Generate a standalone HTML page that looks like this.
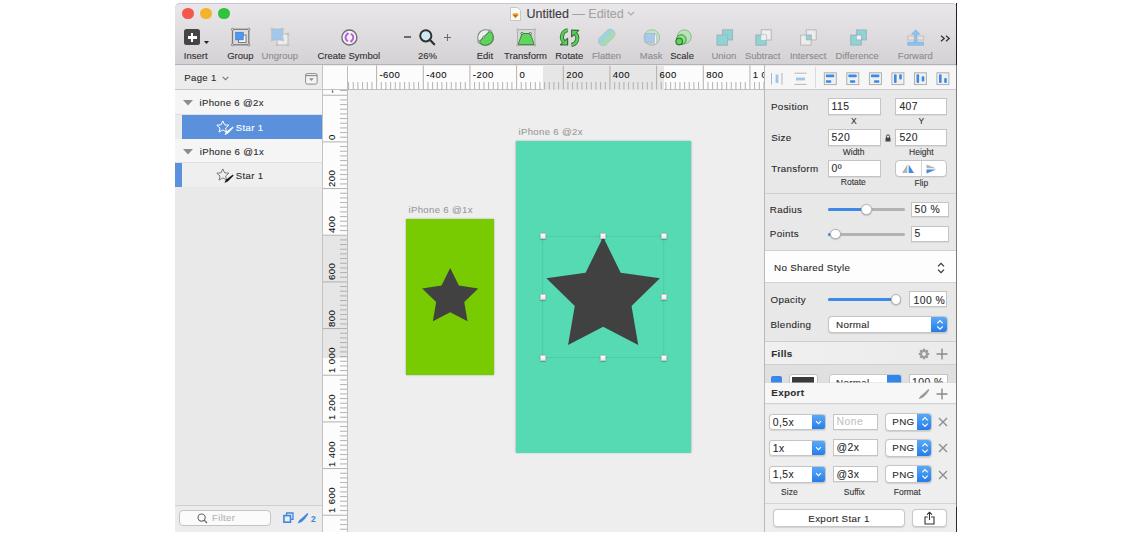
<!DOCTYPE html>
<html><head><meta charset="utf-8">
<style>
*{margin:0;padding:0;box-sizing:border-box}
html,body{width:1131px;height:533px;overflow:hidden;background:#fff;font-family:"Liberation Sans",sans-serif;position:relative}
.a{position:absolute}
.t{position:absolute;line-height:1;white-space:nowrap;-webkit-text-stroke:0.1px currentColor}
svg{position:absolute;overflow:visible}
.tl{position:absolute;line-height:1;white-space:nowrap;font-size:9.5px;color:#303030;top:50.6px;width:80px;text-align:center;-webkit-text-stroke:0.1px currentColor}
.tl.d{color:#8c8c8c}
.dot{position:absolute;top:7.5px;width:11.5px;height:11.5px;border-radius:50%}
.row{position:absolute;left:175px;width:147.5px;height:24.5px}
</style></head><body>
<!-- window frame -->
<div class="a" id="win" style="left:175px;top:3px;width:782px;height:529px;background:#ececec;border-radius:5px 5px 0 0;overflow:hidden"></div>
<div class="a" style="left:175px;top:3px;width:782px;height:62px;background:linear-gradient(#e9e7e9,#d4d2d4);border-radius:5px 5px 0 0;border-bottom:1px solid #b4b2b4;border-top:1px solid #c9c7c9"></div>
<div class="a" style="left:956px;top:3px;width:1px;height:529px;background:linear-gradient(#222 0,#222 62px,#7a7a7a 62px,#7a7a7a 504px,#2a2a2a 504px)"></div>

<!-- traffic lights -->
<div class="dot" style="left:182px;background:#f4584d"></div>
<div class="dot" style="left:200px;background:#f5b32c"></div>
<div class="dot" style="left:218px;background:#30c33e"></div>

<!-- title -->
<svg style="left:510px;top:7px" width="11" height="14" viewBox="0 0 11 14"><path d="M0.5 0.5H7.5L10.5 3.5V13.5H0.5Z" fill="#fafafa" stroke="#bdbdbd" stroke-width="0.8"/><path d="M1.8 7.6L3.6 5.9H7.4L9.2 7.6L5.5 11.6Z" fill="#c9d64a"/><path d="M3 7.8H8L5.5 10.8Z" fill="#ec4a22"/><path d="M3.8 6.6H7.2L8 7.8H3Z" fill="#f2a53a"/></svg>
<div class="t" style="left:526.5px;top:7.6px;font-size:12.5px;color:#3b3b3b">Untitled <span style="color:#a3a3a3">— Edited</span></div>
<svg style="left:627px;top:11px" width="8" height="5" viewBox="0 0 8 5"><path d="M0.8 0.8L4 4L7.2 0.8" fill="none" stroke="#a9a9a9" stroke-width="1.2"/></svg>

<!-- toolbar icons -->
<!-- Insert -->
<div class="a" style="left:184px;top:29px;width:16px;height:16px;background:#454545;border-radius:2.5px"></div>
<div class="a" style="left:187.5px;top:35.9px;width:9px;height:2.9px;background:#fff"></div>
<div class="a" style="left:190.55px;top:32.9px;width:2.9px;height:9px;background:#fff"></div>
<svg style="left:204px;top:41px" width="5" height="3" viewBox="0 0 5 3"><path d="M0 0H5L2.5 3Z" fill="#222"/></svg>
<div class="tl" style="left:155.7px">Insert</div>
<!-- Group -->
<svg style="left:231px;top:28px" width="20" height="18" viewBox="0 0 20 18">
<rect x="1.5" y="1.3" width="16.3" height="15.5" fill="none" stroke="#7a7a7a" stroke-width="1.3"/>
<rect x="7.5" y="7" width="7.5" height="7.5" fill="#f4f4f4" stroke="#7a7a7a" stroke-width="1"/>
<rect x="4.7" y="4.3" width="7.5" height="7.5" fill="#4c9af0" stroke="#3f7fcf" stroke-width="0.8"/>
<circle cx="1.5" cy="1.3" r="1.1" fill="#eee" stroke="#7a7a7a" stroke-width="0.8"/><circle cx="17.8" cy="1.3" r="1.1" fill="#eee" stroke="#7a7a7a" stroke-width="0.8"/><circle cx="1.5" cy="16.8" r="1.1" fill="#eee" stroke="#7a7a7a" stroke-width="0.8"/><circle cx="17.8" cy="16.8" r="1.1" fill="#eee" stroke="#7a7a7a" stroke-width="0.8"/>
</svg>
<div class="tl" style="left:200.35px">Group</div>
<!-- Ungroup -->
<svg style="left:270px;top:28px" width="20" height="18" viewBox="0 0 20 18">
<rect x="7" y="6" width="11" height="11" fill="#ececec" stroke="#b9b9b9" stroke-width="0.9"/>
<rect x="1.8" y="1" width="11" height="11" fill="#a4c8ec" stroke="#a9bfd6" stroke-width="0.8"/>
<circle cx="1.8" cy="1" r="1" fill="#e8e8e8" stroke="#aaa" stroke-width="0.6"/><circle cx="12.8" cy="1" r="1" fill="#e8e8e8" stroke="#aaa" stroke-width="0.6"/><circle cx="1.8" cy="12" r="1" fill="#e8e8e8" stroke="#aaa" stroke-width="0.6"/><circle cx="12.8" cy="12" r="1" fill="#e8e8e8" stroke="#aaa" stroke-width="0.6"/><circle cx="18" cy="6" r="1" fill="#e8e8e8" stroke="#aaa" stroke-width="0.6"/><circle cx="18" cy="17" r="1" fill="#e8e8e8" stroke="#aaa" stroke-width="0.6"/><circle cx="7" cy="17" r="1" fill="#e8e8e8" stroke="#aaa" stroke-width="0.6"/>
</svg>
<div class="tl d" style="left:239.85px">Ungroup</div>
<!-- Create Symbol -->
<svg style="left:341px;top:28.5px" width="17" height="17" viewBox="0 0 17 17">
<circle cx="8.4" cy="8.5" r="7.5" fill="#f6f4f6" stroke="#6f6d6f" stroke-width="1.4"/>
<path d="M7.1 4.9A3.8 3.8 0 0 0 7.1 12.1" fill="none" stroke="#b55ee2" stroke-width="1.9"/>
<path d="M9.7 4.9A3.8 3.8 0 0 1 9.7 12.1" fill="none" stroke="#b55ee2" stroke-width="1.9"/>
<path d="M5.4 3.6L8.2 4.1L6.3 6.4Z" fill="#b55ee2"/><path d="M11.4 13.4L8.6 12.9L10.5 10.6Z" fill="#b55ee2"/>
</svg>
<div class="tl" style="left:308.8px">Create Symbol</div>
<!-- Zoom -->
<div class="a" style="left:404px;top:36.2px;width:7.2px;height:1.6px;background:#6b6b6b"></div>
<svg style="left:419px;top:28.5px" width="17" height="17" viewBox="0 0 17 17">
<circle cx="6.8" cy="6.8" r="5.6" fill="#cfe9f3" stroke="#2f2f2f" stroke-width="2"/>
<path d="M10.8 10.8L15.2 15.3" stroke="#2f2f2f" stroke-width="2.2" stroke-linecap="round"/>
</svg>
<div class="a" style="left:443.7px;top:36.5px;width:7.2px;height:1.6px;background:#6b6b6b"></div>
<div class="a" style="left:446.5px;top:33.7px;width:1.6px;height:7.2px;background:#6b6b6b"></div>
<div class="tl" style="left:387.5px">26%</div>
<!-- Edit -->
<svg style="left:476.5px;top:28.5px" width="17" height="17" viewBox="0 0 17 17">
<circle cx="8.6" cy="8.6" r="7.9" fill="#eeeeee" stroke="#7c8f7c" stroke-width="1.1"/>
<path d="M1.9 12.9L12.9 1.9A7.9 7.9 0 1 1 1.9 12.9Z" fill="#5fd35f" stroke="#4b8a4b" stroke-width="1.1"/>
<circle cx="1.9" cy="12.9" r="1.1" fill="#eee" stroke="#666" stroke-width="0.7"/><circle cx="12.9" cy="1.9" r="1.1" fill="#eee" stroke="#666" stroke-width="0.7"/><circle cx="6.6" cy="8.2" r="1" fill="#eee" stroke="#666" stroke-width="0.7"/>
</svg>
<div class="tl" style="left:444.85px">Edit</div>
<!-- Transform -->
<svg style="left:516.5px;top:28.5px" width="18" height="17" viewBox="0 0 18 17">
<rect x="0.5" y="0.5" width="17.4" height="15.8" fill="#d3dad3" stroke="#a3a3a3" stroke-width="0.8"/>
<path d="M5 4.5H13.3L17.2 15.6H1.1Z" fill="#5cd65c" stroke="#3b7b3b" stroke-width="0.9" stroke-linejoin="round"/>
<circle cx="5" cy="4.5" r="1.1" fill="#eee" stroke="#444" stroke-width="0.7"/><circle cx="13.3" cy="4.5" r="1.1" fill="#eee" stroke="#444" stroke-width="0.7"/>
<circle cx="0.5" cy="0.5" r="0.9" fill="#ddd" stroke="#999" stroke-width="0.5"/><circle cx="17.9" cy="0.5" r="0.9" fill="#ddd" stroke="#999" stroke-width="0.5"/><circle cx="0.5" cy="16.3" r="0.9" fill="#ddd" stroke="#888" stroke-width="0.5"/><circle cx="17.9" cy="16.3" r="0.9" fill="#ddd" stroke="#888" stroke-width="0.5"/>
</svg>
<div class="tl" style="left:485.55px">Transform</div>
<!-- Rotate -->
<svg style="left:559px;top:28.5px" width="22" height="17" viewBox="0 0 22 17">
<g id="rl"><path d="M8.8 1.2C3.2 2.2 0.8 8.6 5 13" fill="none" stroke="#3b6b3b" stroke-width="3.9"/>
<path d="M1.5 15.8L8.6 16V9.4Z" fill="#3b6b3b" stroke="#3b6b3b" stroke-width="1.2" stroke-linejoin="round"/>
<path d="M8.8 1.2C3.2 2.2 0.8 8.6 5 13" fill="none" stroke="#57d457" stroke-width="2.2"/>
<path d="M2.6 15.3L8 15.4V10.6Z" fill="#57d457"/></g>
<use href="#rl" transform="rotate(180 10.6 8.6)"/>
</svg>
<div class="tl" style="left:529.25px">Rotate</div>
<!-- Flatten -->
<svg style="left:597.5px;top:28.5px" width="18" height="17" viewBox="0 0 18 17">
<g transform="rotate(-45 8.7 8.5)"><rect x="-1.05" y="3.75" width="19.5" height="9.5" rx="4.75" fill="#a8dcb0"/>
<path d="M3.7 3.75H13.7A4.75 4.75 0 0 1 18.45 8.5H-1.05A4.75 4.75 0 0 1 3.7 3.75Z" fill="#9dd2e3"/><rect x="-1.05" y="3.75" width="19.5" height="9.5" rx="4.75" fill="none" stroke="#b0c4bd" stroke-width="0.8"/></g>
</svg>
<div class="tl d" style="left:566.5px">Flatten</div>
<!-- Mask -->
<svg style="left:643px;top:28.5px" width="18" height="17" viewBox="0 0 18 17">
<circle cx="8.8" cy="8.5" r="7.8" fill="#bfe6c2" stroke="#a2bda5" stroke-width="0.9"/>
<rect x="4.3" y="5.8" width="9.5" height="9" fill="#f4f4f4" stroke="#b0b0b0" stroke-width="0.7"/>
<rect x="2" y="4.5" width="9.4" height="9" fill="#a9c9ea" stroke="#9ab5d0" stroke-width="0.7"/>
</svg>
<div class="tl d" style="left:611.2px">Mask</div>
<!-- Scale -->
<svg style="left:674.5px;top:28.5px" width="17" height="17" viewBox="0 0 17 17">
<circle cx="9.2" cy="7.8" r="7" fill="#b7e5b7" stroke="#86b486" stroke-width="0.9"/>
<circle cx="6.3" cy="10.6" r="4.9" fill="#8fdc8f" stroke="#3f7f3f" stroke-width="0.9"/>
<circle cx="4.2" cy="12.6" r="3.3" fill="#57d857" stroke="#247a24" stroke-width="1.1"/>
</svg>
<div class="tl" style="left:642.15px">Scale</div>
<!-- Union -->
<svg style="left:715.5px;top:28.5px" width="18" height="17" viewBox="0 0 18 17">
<rect x="6.6" y="0.8" width="10" height="10.2" fill="#8fd3d2" stroke="#9ab" stroke-width="0.8"/>
<rect x="1" y="6" width="10.4" height="10.2" fill="#8fd3d2" stroke="#9ab" stroke-width="0.8"/>
<rect x="6.6" y="6" width="4.8" height="5" fill="#8fd3d2"/>
</svg>
<div class="tl d" style="left:683.9px">Union</div>
<!-- Subtract -->
<svg style="left:754.5px;top:28.5px" width="18" height="17" viewBox="0 0 18 17">
<rect x="6.2" y="0.8" width="10" height="10.2" fill="#eeeeee" stroke="#aaa" stroke-width="0.8"/>
<rect x="0.8" y="6" width="10.4" height="10.2" fill="#8fd3d2" stroke="#9ab" stroke-width="0.8"/>
<rect x="6.2" y="6" width="5" height="5" fill="#eeeeee"/>
</svg>
<div class="tl d" style="left:722.65px">Subtract</div>
<!-- Intersect -->
<svg style="left:800px;top:28.5px" width="18" height="17" viewBox="0 0 18 17">
<rect x="6.2" y="0.9" width="10" height="10" fill="#ececec" stroke="#b0b0b0" stroke-width="0.8"/>
<rect x="0.7" y="6.1" width="10.4" height="10" fill="#ececec" stroke="#b0b0b0" stroke-width="0.8"/>
<rect x="6.2" y="6.1" width="4.9" height="4.8" fill="#8fd3d2" stroke="#9ab" stroke-width="0.6"/>
</svg>
<div class="tl d" style="left:768.1px">Intersect</div>
<!-- Difference -->
<svg style="left:849.5px;top:28.5px" width="18" height="17" viewBox="0 0 18 17">
<rect x="6.3" y="0.9" width="10" height="10" fill="#8fd3d2" stroke="#9ab" stroke-width="0.8"/>
<rect x="0.7" y="6.1" width="10.6" height="10" fill="#8fd3d2" stroke="#9ab" stroke-width="0.8"/>
<rect x="6.3" y="6.1" width="5" height="4.8" fill="#f2f2f2" stroke="#9ab" stroke-width="0.6"/>
</svg>
<div class="tl d" style="left:817.2px">Difference</div>
<!-- Forward -->
<svg style="left:907px;top:28.5px" width="18" height="17" viewBox="0 0 18 17">
<rect x="0.7" y="7" width="16" height="4" fill="#e2e2e2" stroke="#b9b9b9" stroke-width="0.8"/>
<path d="M8.7 0.8L13 5.2H10V13.2H7.4V5.2H4.4Z" fill="#8cc3ee" stroke="#7fb0d8" stroke-width="0.6"/>
<rect x="0.7" y="13.2" width="16" height="3" fill="#8cc3ee" stroke="#7fb0d8" stroke-width="0.6"/>
</svg>
<div class="tl d" style="left:875.25px">Forward</div>
<!-- >> -->
<svg style="left:940px;top:34.5px" width="11" height="7" viewBox="0 0 11 7"><path d="M1 0.8L4.2 3.5L1 6.2M6 0.8L9.2 3.5L6 6.2" fill="none" stroke="#333" stroke-width="1.3"/></svg>


<!-- SIDEBAR -->
<div class="a" style="left:175px;top:65px;width:147.5px;height:467px;background:#e9e9e9"></div>
<div class="a" style="left:175px;top:65px;width:147.5px;height:24.5px;background:#ececec;border-bottom:1px solid #c9c9c9"></div>
<div class="t" style="left:184.3px;top:73.1px;font-size:9.6px;letter-spacing:0.32px;color:#2a2a2a">Page 1</div>
<svg style="left:222px;top:75.5px" width="7" height="5" viewBox="0 0 7 5"><path d="M0.7 0.8L3.5 3.6L6.3 0.8" fill="none" stroke="#777" stroke-width="1.1"/></svg>
<svg style="left:305px;top:72.5px" width="13" height="12" viewBox="0 0 13 12"><rect x="0.6" y="0.6" width="11.5" height="10.5" rx="1.5" fill="#f4f4f4" stroke="#8e8e8e" stroke-width="1"/><path d="M0.6 2.6H12.1" stroke="#8e8e8e" stroke-width="1.2"/><path d="M4 5.3H8.8L6.4 8Z" fill="#8e8e8e"/></svg>
<div class="row" style="top:89.5px;height:25px;background:#f5f5f5;border-bottom:1px solid #e0e0e0"></div>
<svg style="left:182.7px;top:100px" width="10" height="5.5" viewBox="0 0 10 5.5"><path d="M0 0H10L5 5.5Z" fill="#8c8c8c"/></svg>
<div class="t" style="left:199.5px;top:98.0px;font-size:9.6px;letter-spacing:0.32px;color:#2a2a2a">iPhone 6 @2x</div>
<div class="a" style="left:175px;top:114.5px;width:7px;height:24.5px;background:#ececec"></div>
<div class="a" style="left:182px;top:114.5px;width:140.5px;height:24.5px;background:#5b90dc"></div>
<svg style="left:215.5px;top:119.5px" width="18" height="16" viewBox="0 0 18 16"><path d="M6.8 0.9L8.6 4.8L12.8 5.2L9.6 8L10.6 12.1L6.8 9.9L3 12.1L4 8L0.8 5.2L5 4.8Z" fill="none" stroke="#fff" stroke-width="1"/><path d="M8.8 14.8L10 12.2L16.6 6.9L17.5 7.6L11.8 13.4Z" fill="#fff" stroke="#fff" stroke-width="0.4" stroke-linejoin="round"/></svg>
<div class="t" style="left:235.8px;top:122.5px;font-size:9.6px;letter-spacing:0.32px;color:#fff">Star 1</div>
<div class="row" style="top:139px;height:24px;background:#f5f5f5;border-bottom:1px solid #e0e0e0"></div>
<svg style="left:183.3px;top:148.7px" width="10" height="5.5" viewBox="0 0 10 5.5"><path d="M0 0H10L5 5.5Z" fill="#8c8c8c"/></svg>
<div class="t" style="left:199.8px;top:146.9px;font-size:9.6px;letter-spacing:0.32px;color:#2a2a2a">iPhone 6 @1x</div>
<div class="a" style="left:175px;top:163px;width:147.5px;height:24.3px;background:#efefef"></div>
<div class="a" style="left:175px;top:163px;width:6.5px;height:24.3px;background:#5b90dc"></div>
<svg style="left:215.5px;top:168px" width="18" height="16" viewBox="0 0 18 16"><path d="M6.8 0.9L8.6 4.8L12.8 5.2L9.6 8L10.6 12.1L6.8 9.9L3 12.1L4 8L0.8 5.2L5 4.8Z" fill="none" stroke="#7a7a7a" stroke-width="1"/><path d="M8.8 14.6L10 12L16.6 6.9L17.5 7.6L11.8 13.2Z" fill="#111" stroke="#111" stroke-width="0.4" stroke-linejoin="round"/></svg>
<div class="t" style="left:235.8px;top:170.9px;font-size:9.6px;letter-spacing:0.32px;color:#2a2a2a">Star 1</div>
<!-- sidebar footer -->
<div class="a" style="left:175px;top:504.5px;width:147.5px;height:27.5px;background:#ececec;border-top:1px solid #cfcfcf"></div>
<div class="a" style="left:179px;top:509.8px;width:91.7px;height:16.6px;background:#fbfbfb;border:1px solid #c4c4c4;border-radius:4px"></div>
<svg style="left:197px;top:512.5px" width="11" height="11" viewBox="0 0 11 11"><circle cx="4.6" cy="4.6" r="3.6" fill="none" stroke="#666" stroke-width="1.1"/><path d="M7.2 7.2L10 10" stroke="#666" stroke-width="1.2"/></svg>
<div class="t" style="left:212px;top:513.2px;font-size:9.6px;letter-spacing:0.32px;color:#b4b4b4">Filter</div>
<svg style="left:283px;top:511.5px" width="11" height="12" viewBox="0 0 11 12"><rect x="0.9" y="3.6" width="6.6" height="6.6" fill="none" stroke="#3f86e0" stroke-width="1.6"/><path d="M3.6 3.6V1H10V7.4H7.5" fill="none" stroke="#3f86e0" stroke-width="1.3"/></svg>
<svg style="left:297px;top:512px" width="12" height="12" viewBox="0 0 12 12"><path d="M0.6 11.4L2.2 8.2C5 6 8 3.5 10.4 1L11.4 1.9C9.5 5 7 8 4.6 9.9Z" fill="#3f86e0"/></svg>
<div class="t" style="left:311px;top:514.6px;font-size:8.5px;color:#3f86e0;font-weight:bold">2</div>
<div class="a" style="left:322px;top:65px;width:1px;height:467px;background:#c3c3c3"></div>


<!-- CANVAS -->
<div class="a" style="left:348px;top:90px;width:416.5px;height:442px;background:#eeeeee"></div>
<div class="t" style="left:408.5px;top:205.4px;font-size:9.6px;letter-spacing:0.32px;color:#9b9b9b">iPhone 6 @1x</div>
<div class="a" style="left:406.3px;top:219.3px;width:87.8px;height:155.9px;background:#78cb00;box-shadow:0 0.3px 1.8px rgba(0,0,0,0.3)"></div>
<div class="t" style="left:518.5px;top:127.1px;font-size:9.6px;letter-spacing:0.32px;color:#9b9b9b">iPhone 6 @2x</div>
<div class="a" style="left:516.4px;top:141.3px;width:174.6px;height:311.7px;background:#55dab4;box-shadow:0 0.3px 2.2px rgba(0,0,0,0.38)"></div>
<svg style="left:0;top:0" width="1131" height="533" viewBox="0 0 1131 533">
<polygon points="450.20,268.00 458.87,285.57 478.26,288.38 464.23,302.06 467.54,321.37 450.20,312.25 432.86,321.37 436.17,302.06 422.14,288.38 441.53,285.57" fill="#414141"/>
<polygon points="603.15,237.10 620.70,272.65 659.93,278.35 631.54,306.02 638.24,345.10 603.15,326.65 568.06,345.10 574.76,306.02 546.37,278.35 585.60,272.65" fill="#414141"/>
<rect x="542.8" y="236.2" width="121" height="121.5" fill="none" stroke="#3fae8f" stroke-width="0.6" opacity="0.55"/>
</svg>
<div class="a" style="left:539.6px;top:233.0px;width:6px;height:6px;background:linear-gradient(#fff,#e9e9e9);border:0.5px solid #c4c4c4;box-shadow:0 0.5px 1.2px rgba(0,0,0,0.4)"></div>
<div class="a" style="left:539.6px;top:293.9px;width:6px;height:6px;background:linear-gradient(#fff,#e9e9e9);border:0.5px solid #c4c4c4;box-shadow:0 0.5px 1.2px rgba(0,0,0,0.4)"></div>
<div class="a" style="left:539.6px;top:354.7px;width:6px;height:6px;background:linear-gradient(#fff,#e9e9e9);border:0.5px solid #c4c4c4;box-shadow:0 0.5px 1.2px rgba(0,0,0,0.4)"></div>
<div class="a" style="left:600.2px;top:233.0px;width:6px;height:6px;background:linear-gradient(#fff,#e9e9e9);border:0.5px solid #c4c4c4;box-shadow:0 0.5px 1.2px rgba(0,0,0,0.4)"></div>
<div class="a" style="left:600.2px;top:354.7px;width:6px;height:6px;background:linear-gradient(#fff,#e9e9e9);border:0.5px solid #c4c4c4;box-shadow:0 0.5px 1.2px rgba(0,0,0,0.4)"></div>
<div class="a" style="left:660.8px;top:233.0px;width:6px;height:6px;background:linear-gradient(#fff,#e9e9e9);border:0.5px solid #c4c4c4;box-shadow:0 0.5px 1.2px rgba(0,0,0,0.4)"></div>
<div class="a" style="left:660.8px;top:293.9px;width:6px;height:6px;background:linear-gradient(#fff,#e9e9e9);border:0.5px solid #c4c4c4;box-shadow:0 0.5px 1.2px rgba(0,0,0,0.4)"></div>
<div class="a" style="left:660.8px;top:354.7px;width:6px;height:6px;background:linear-gradient(#fff,#e9e9e9);border:0.5px solid #c4c4c4;box-shadow:0 0.5px 1.2px rgba(0,0,0,0.4)"></div>
<!-- H RULER -->
<div class="a" style="left:323px;top:65.5px;width:441.5px;height:24px;background:#fcfcfc;border-bottom:1px solid #c2c2c2"></div>
<div class="a" style="left:542.5px;top:65.5px;width:121.3px;height:24px;background:#e6e6e6"></div>
<div class="a" style="left:347px;top:65.5px;width:1px;height:24px;background:#bdbdbd"></div>
<div class="t" style="left:379.5px;top:70px;font-size:9.5px;letter-spacing:0.45px;color:#111">-600</div><div class="t" style="left:426.2px;top:70px;font-size:9.5px;letter-spacing:0.45px;color:#111">-400</div><div class="t" style="left:472.8px;top:70px;font-size:9.5px;letter-spacing:0.45px;color:#111">-200</div><div class="t" style="left:519.5px;top:70px;font-size:9.5px;letter-spacing:0.45px;color:#111">0</div><div class="t" style="left:566.2px;top:70px;font-size:9.5px;letter-spacing:0.45px;color:#111">200</div><div class="t" style="left:612.8px;top:70px;font-size:9.5px;letter-spacing:0.45px;color:#111">400</div><div class="t" style="left:659.5px;top:70px;font-size:9.5px;letter-spacing:0.45px;color:#111">600</div><div class="t" style="left:706.2px;top:70px;font-size:9.5px;letter-spacing:0.45px;color:#111">800</div><div class="t" style="left:752.8px;top:70px;font-size:9.5px;letter-spacing:0.45px;color:#111">1 000</div>
<div class="a" style="left:0;top:0;width:1131px;height:533px;overflow:hidden;clip-path:inset(90px 0 0 0)"><div class="a" style="left:323px;top:90px;width:24px;height:442px;background:#fcfcfc"></div>
<div class="a" style="left:323px;top:236px;width:24px;height:121.7px;background:#e6e6e6"></div>
<div class="a" style="left:347px;top:90px;width:1px;height:442px;background:#bdbdbd"></div>
<div class="t" style="left:327.1px;top:93.3px;font-size:9.5px;letter-spacing:0.45px;color:#111;transform-origin:0 0;transform:rotate(-90deg)">-200</div>
<div class="t" style="left:327.1px;top:140.0px;font-size:9.5px;letter-spacing:0.45px;color:#111;transform-origin:0 0;transform:rotate(-90deg)">0</div>
<div class="t" style="left:327.1px;top:186.7px;font-size:9.5px;letter-spacing:0.45px;color:#111;transform-origin:0 0;transform:rotate(-90deg)">200</div>
<div class="t" style="left:327.1px;top:233.3px;font-size:9.5px;letter-spacing:0.45px;color:#111;transform-origin:0 0;transform:rotate(-90deg)">400</div>
<div class="t" style="left:327.1px;top:280.0px;font-size:9.5px;letter-spacing:0.45px;color:#111;transform-origin:0 0;transform:rotate(-90deg)">600</div>
<div class="t" style="left:327.1px;top:326.7px;font-size:9.5px;letter-spacing:0.45px;color:#111;transform-origin:0 0;transform:rotate(-90deg)">800</div>
<div class="t" style="left:327.1px;top:373.3px;font-size:9.5px;letter-spacing:0.45px;color:#111;transform-origin:0 0;transform:rotate(-90deg)">1 000</div>
<div class="t" style="left:327.1px;top:420.0px;font-size:9.5px;letter-spacing:0.45px;color:#111;transform-origin:0 0;transform:rotate(-90deg)">1 200</div>
<div class="t" style="left:327.1px;top:466.7px;font-size:9.5px;letter-spacing:0.45px;color:#111;transform-origin:0 0;transform:rotate(-90deg)">1 400</div>
<div class="t" style="left:327.1px;top:513.3px;font-size:9.5px;letter-spacing:0.45px;color:#111;transform-origin:0 0;transform:rotate(-90deg)">1 600</div>
<div class="t" style="left:327.1px;top:560.0px;font-size:9.5px;letter-spacing:0.45px;color:#111;transform-origin:0 0;transform:rotate(-90deg)">1 800</div></div>
<svg style="left:0;top:0" width="1131" height="533" viewBox="0 0 1131 533"><path d="M348.60 82V89.5M353.27 82V89.5M357.93 82V89.5M362.60 82V89.5M367.27 82V89.5M371.93 82V89.5M376.60 65.5V89.5M381.27 82V89.5M385.93 82V89.5M390.60 82V89.5M395.27 82V89.5M399.93 82V89.5M404.60 82V89.5M409.27 82V89.5M413.93 82V89.5M418.60 82V89.5M423.27 65.5V89.5M427.93 82V89.5M432.60 82V89.5M437.27 82V89.5M441.93 82V89.5M446.60 82V89.5M451.27 82V89.5M455.93 82V89.5M460.60 82V89.5M465.27 82V89.5M469.93 65.5V89.5M474.60 82V89.5M479.27 82V89.5M483.93 82V89.5M488.60 82V89.5M493.27 82V89.5M497.93 82V89.5M502.60 82V89.5M507.27 82V89.5M511.93 82V89.5M516.60 65.5V89.5M521.27 82V89.5M525.93 82V89.5M530.60 82V89.5M535.27 82V89.5M539.93 82V89.5M544.60 82V89.5M549.27 82V89.5M553.93 82V89.5M558.60 82V89.5M563.27 65.5V89.5M567.93 82V89.5M572.60 82V89.5M577.27 82V89.5M581.93 82V89.5M586.60 82V89.5M591.27 82V89.5M595.93 82V89.5M600.60 82V89.5M605.27 82V89.5M609.93 65.5V89.5M614.60 82V89.5M619.27 82V89.5M623.93 82V89.5M628.60 82V89.5M633.27 82V89.5M637.93 82V89.5M642.60 82V89.5M647.27 82V89.5M651.93 82V89.5M656.60 65.5V89.5M661.27 82V89.5M665.93 82V89.5M670.60 82V89.5M675.27 82V89.5M679.93 82V89.5M684.60 82V89.5M689.27 82V89.5M693.93 82V89.5M698.60 82V89.5M703.27 65.5V89.5M707.93 82V89.5M712.60 82V89.5M717.27 82V89.5M721.93 82V89.5M726.60 82V89.5M731.27 82V89.5M735.93 82V89.5M740.60 82V89.5M745.27 82V89.5M749.94 65.5V89.5M754.60 82V89.5M759.27 82V89.5M763.94 82V89.5" stroke="#a9a9a9" stroke-width="0.9" fill="none"/><path d="M340 90.57H347M323 95.23H347M340 99.90H347M340 104.57H347M340 109.23H347M340 113.90H347M340 118.57H347M340 123.23H347M340 127.90H347M340 132.57H347M340 137.23H347M323 141.90H347M340 146.57H347M340 151.23H347M340 155.90H347M340 160.57H347M340 165.23H347M340 169.90H347M340 174.57H347M340 179.23H347M340 183.90H347M323 188.57H347M340 193.23H347M340 197.90H347M340 202.57H347M340 207.23H347M340 211.90H347M340 216.57H347M340 221.23H347M340 225.90H347M340 230.57H347M323 235.23H347M340 239.90H347M340 244.57H347M340 249.23H347M340 253.90H347M340 258.57H347M340 263.23H347M340 267.90H347M340 272.57H347M340 277.23H347M323 281.90H347M340 286.57H347M340 291.23H347M340 295.90H347M340 300.57H347M340 305.23H347M340 309.90H347M340 314.57H347M340 319.23H347M340 323.90H347M323 328.57H347M340 333.23H347M340 337.90H347M340 342.57H347M340 347.23H347M340 351.90H347M340 356.57H347M340 361.23H347M340 365.90H347M340 370.57H347M323 375.24H347M340 379.90H347M340 384.57H347M340 389.24H347M340 393.90H347M340 398.57H347M340 403.24H347M340 407.90H347M340 412.57H347M340 417.24H347M323 421.90H347M340 426.57H347M340 431.24H347M340 435.90H347M340 440.57H347M340 445.24H347M340 449.90H347M340 454.57H347M340 459.24H347M340 463.90H347M323 468.57H347M340 473.24H347M340 477.90H347M340 482.57H347M340 487.24H347M340 491.90H347M340 496.57H347M340 501.24H347M340 505.90H347M340 510.57H347M323 515.24H347M340 519.90H347M340 524.57H347M340 529.24H347" stroke="#a9a9a9" stroke-width="0.9" fill="none"/></svg>
<!-- INSPECTOR -->
<div class="a" style="left:764px;top:65px;width:1px;height:467px;background:#b9b9b9"></div>
<div class="a" style="left:765px;top:65px;width:191px;height:467px;background:#e8e8e8"></div>
<div class="a" style="left:765px;top:65.5px;width:191px;height:24px;background:#f6f6f6;border-bottom:1px solid #cbcbcb"></div>
<div class="a" style="left:815px;top:67px;width:1px;height:20.5px;background:#dadada"></div>
<svg style="left:0;top:0" width="1131" height="533" viewBox="0 0 1131 533"><path d="M771.5 73V84.5M782 73V84.5" stroke="#b5b5b5" stroke-width="1"/><rect x="775.6" y="74.5" width="2.8" height="8.5" fill="#9cc6ee"/><path d="M794.5 73.2H806.5M794.5 84.4H806.5" stroke="#b5b5b5" stroke-width="1"/><rect x="796" y="77.6" width="9" height="2.8" fill="#9cc6ee"/><rect x="824.3" y="72.8" width="12" height="11.8" fill="#f0f0f0" stroke="#a9a9a9" stroke-width="0.9"/><rect x="825.8" y="74.6" width="8.5" height="2.6" rx="1" fill="#3d8ae6"/><rect x="825.8" y="80.2" width="5.5" height="2.6" rx="1" fill="#3d8ae6"/><rect x="846.8" y="72.8" width="12" height="11.8" fill="#f0f0f0" stroke="#a9a9a9" stroke-width="0.9"/><rect x="848.3" y="74.6" width="8.5" height="2.6" rx="1" fill="#3d8ae6"/><rect x="849.8" y="80.2" width="5.5" height="2.6" rx="1" fill="#3d8ae6"/><rect x="869.4" y="72.8" width="12" height="11.8" fill="#f0f0f0" stroke="#a9a9a9" stroke-width="0.9"/><rect x="870.9" y="74.6" width="8.5" height="2.6" rx="1" fill="#3d8ae6"/><rect x="873.9" y="80.2" width="5.5" height="2.6" rx="1" fill="#3d8ae6"/><rect x="891.9" y="72.8" width="12" height="11.8" fill="#f0f0f0" stroke="#a9a9a9" stroke-width="0.9"/><rect x="894.0" y="74.3" width="2.6" height="8.8" rx="1" fill="#3d8ae6"/><rect x="899.1999999999999" y="74.3" width="2.6" height="5.2" rx="1" fill="#3d8ae6"/><rect x="914.4" y="72.8" width="12" height="11.8" fill="#f0f0f0" stroke="#a9a9a9" stroke-width="0.9"/><rect x="916.5" y="74.3" width="2.6" height="8.8" rx="1" fill="#3d8ae6"/><rect x="921.6999999999999" y="76.2" width="2.6" height="5.2" rx="1" fill="#3d8ae6"/><rect x="936.9" y="72.8" width="12" height="11.8" fill="#f0f0f0" stroke="#a9a9a9" stroke-width="0.9"/><rect x="939.0" y="74.3" width="2.6" height="8.8" rx="1" fill="#3d8ae6"/><rect x="944.1999999999999" y="77.9" width="2.6" height="5.2" rx="1" fill="#3d8ae6"/></svg>
<div class="t" style="left:771px;top:101.9px;font-size:9.8px;letter-spacing:0.33px;color:#2a2a2a;">Position</div>
<div class="a" style="left:827.5px;top:97.6px;width:53.0px;height:17.2px;background:#fff;border:1px solid #c4c4c4;box-shadow:0 0.5px 0.5px rgba(0,0,0,0.06);"></div>
<div class="t" style="left:831.6px;top:101.7px;font-size:10.4px;letter-spacing:0.45px;color:#2a2a2a;">115</div>
<div class="a" style="left:895.3px;top:97.6px;width:52.2px;height:17.2px;background:#fff;border:1px solid #c4c4c4;box-shadow:0 0.5px 0.5px rgba(0,0,0,0.06);"></div>
<div class="t" style="left:899.4px;top:101.7px;font-size:10.4px;letter-spacing:0.45px;color:#2a2a2a;">407</div>
<div class="t" style="left:813.9px;width:80px;text-align:center;top:116.9px;font-size:8.5px;color:#333;">X</div>
<div class="t" style="left:881.4px;width:80px;text-align:center;top:116.9px;font-size:8.5px;color:#333;">Y</div>
<div class="t" style="left:771.2px;top:133.1px;font-size:9.8px;letter-spacing:0.33px;color:#2a2a2a;">Size</div>
<div class="a" style="left:827.5px;top:129.4px;width:53.0px;height:16.2px;background:#fff;border:1px solid #c4c4c4;box-shadow:0 0.5px 0.5px rgba(0,0,0,0.06);"></div>
<div class="t" style="left:831.6px;top:133.1px;font-size:10.4px;letter-spacing:0.45px;color:#2a2a2a;">520</div>
<div class="a" style="left:895.3px;top:129.4px;width:52.2px;height:16.2px;background:#fff;border:1px solid #c4c4c4;box-shadow:0 0.5px 0.5px rgba(0,0,0,0.06);"></div>
<div class="t" style="left:899.4px;top:133.1px;font-size:10.4px;letter-spacing:0.45px;color:#2a2a2a;">520</div>
<svg style="left:884.5px;top:134px" width="6" height="8" viewBox="0 0 6 8"><path d="M1.5 3.5V2.3A1.5 1.5 0 0 1 4.5 2.3V3.5" fill="none" stroke="#444" stroke-width="1"/><rect x="0.5" y="3.5" width="5" height="4" fill="#444"/></svg>
<div class="t" style="left:813.6px;width:80px;text-align:center;top:147.8px;font-size:8.5px;color:#333;">Width</div>
<div class="t" style="left:881.4px;width:80px;text-align:center;top:147.8px;font-size:8.5px;color:#333;">Height</div>
<div class="t" style="left:771.2px;top:163.9px;font-size:9.8px;letter-spacing:0.33px;color:#2a2a2a;">Transform</div>
<div class="a" style="left:827.5px;top:160.4px;width:53.0px;height:16.6px;background:#fff;border:1px solid #c4c4c4;box-shadow:0 0.5px 0.5px rgba(0,0,0,0.06);"></div>
<div class="t" style="left:831.6px;top:163.9px;font-size:10.4px;letter-spacing:0.45px;color:#2a2a2a;">0º</div>
<div class="t" style="left:813.3px;width:80px;text-align:center;top:178.3px;font-size:8.5px;color:#333;">Rotate</div>
<div class="a" style="left:895.3px;top:160.4px;width:52.2px;height:16.8px;background:#fff;border:1px solid #c4c4c4;border-radius:4px;box-shadow:0 0.5px 0.5px rgba(0,0,0,0.1)"></div>
<div class="a" style="left:921.3px;top:161px;width:1px;height:15.6px;background:#d4d4d4"></div>
<svg style="left:900px;top:163px" width="45" height="12" viewBox="0 0 45 12"><path d="M7.3 1.5V10H2Z" fill="#b4b4b4"/><path d="M8.7 1.5V10H14Z" fill="#3f8ae5"/><path d="M26.5 1.5L36 5.2H26.5Z" fill="#b4b4b4"/><path d="M26.5 6.5H36L26.5 10.5Z" fill="#3f8ae5"/></svg>
<div class="t" style="left:881.4px;width:80px;text-align:center;top:179.1px;font-size:8.5px;color:#333;">Flip</div>
<div class="a" style="left:765px;top:193px;width:191px;height:1px;background:#d0d0d0"></div>
<div class="t" style="left:769.8px;top:204.7px;font-size:9.8px;letter-spacing:0.33px;color:#2a2a2a;">Radius</div>
<div class="a" style="left:827.5px;top:208.2px;width:77.39999999999998px;height:3px;border-radius:1.5px;background:#b3b3b3"></div><div class="a" style="left:827.5px;top:208.2px;width:38.799999999999955px;height:3px;border-radius:1.5px;background:#3d8ae6"></div><div class="a" style="left:861.0px;top:204.39999999999998px;width:10.6px;height:10.6px;border-radius:50%;background:#fff;border:0.5px solid #b5b5b5;box-shadow:0 0.5px 1.2px rgba(0,0,0,0.3)"></div>
<div class="a" style="left:911.3px;top:201.6px;width:38px;height:15.9px;background:#fff;border:1px solid #c4c4c4;box-shadow:0 0.5px 0.5px rgba(0,0,0,0.06);"></div>
<div class="t" style="left:914.6px;top:204.7px;font-size:10.4px;letter-spacing:0.45px;color:#2a2a2a;">50 %</div>
<div class="t" style="left:769.8px;top:229.2px;font-size:9.8px;letter-spacing:0.33px;color:#2a2a2a;">Points</div>
<div class="a" style="left:827.5px;top:232.7px;width:77.39999999999998px;height:3px;border-radius:1.5px;background:#b3b3b3"></div><div class="a" style="left:827.5px;top:232.7px;width:7.899999999999977px;height:3px;border-radius:1.5px;background:#3d8ae6"></div><div class="a" style="left:830.1px;top:228.89999999999998px;width:10.6px;height:10.6px;border-radius:50%;background:#fff;border:0.5px solid #b5b5b5;box-shadow:0 0.5px 1.2px rgba(0,0,0,0.3)"></div>
<div class="a" style="left:911.3px;top:225.5px;width:38px;height:16.2px;background:#fff;border:1px solid #c4c4c4;box-shadow:0 0.5px 0.5px rgba(0,0,0,0.06);"></div>
<div class="t" style="left:914.6px;top:229.2px;font-size:10.4px;letter-spacing:0.45px;color:#2a2a2a;">5</div>
<div class="a" style="left:765px;top:249.5px;width:191px;height:1px;background:#d0d0d0"></div>
<div class="a" style="left:765px;top:250.5px;width:191px;height:32.5px;background:#fdfdfd;border-bottom:1px solid #d2d2d2"></div>
<div class="t" style="left:774px;top:263.4px;font-size:9.8px;letter-spacing:0.33px;color:#2a2a2a;">No Shared Style</div>
<svg style="left:937px;top:261.8px" width="8" height="12" viewBox="0 0 8 12"><path d="M1 4.3L4 1.3L7 4.3M1 7.7L4 10.7L7 7.7" fill="none" stroke="#333" stroke-width="1.2"/></svg>
<div class="t" style="left:770.5px;top:295.3px;font-size:9.8px;letter-spacing:0.33px;color:#2a2a2a;">Opacity</div>
<div class="a" style="left:828.4px;top:298.2px;width:71.6px;height:3px;border-radius:1.5px;background:#b3b3b3"></div><div class="a" style="left:828.4px;top:298.2px;width:67.5px;height:3px;border-radius:1.5px;background:#3d8ae6"></div><div class="a" style="left:890.6px;top:294.4px;width:10.6px;height:10.6px;border-radius:50%;background:#fff;border:0.5px solid #b5b5b5;box-shadow:0 0.5px 1.2px rgba(0,0,0,0.3)"></div>
<div class="a" style="left:909.2px;top:291.1px;width:38.2px;height:16.4px;background:#fff;border:1px solid #c4c4c4;box-shadow:0 0.5px 0.5px rgba(0,0,0,0.06);"></div>
<div class="t" style="left:913.6px;top:295.6px;font-size:10.4px;letter-spacing:0.45px;color:#2a2a2a;">100 %</div>
<div class="t" style="left:770.5px;top:320.1px;font-size:9.8px;letter-spacing:0.33px;color:#2a2a2a;">Blending</div>
<div class="a" style="left:828.1px;top:315.8px;width:119.6px;height:17.7px;background:#fff;border:1px solid #c6c6c6;border-radius:4px;box-shadow:0 0.5px 1px rgba(0,0,0,0.12);overflow:hidden"><div class="a" style="right:0;top:0;width:15.5px;height:16.2px;background:linear-gradient(#5ba9f7,#1f78e6)"></div></div>
<svg style="left:936.4px;top:318.8px" width="8" height="12" viewBox="0 0 8 12"><path d="M1.3 4.3L4 1.6L6.7 4.3M1.3 7.5L4 10.2L6.7 7.5" fill="none" stroke="#fff" stroke-width="1.2"/></svg>
<div class="t" style="left:836px;top:320.3px;font-size:9.8px;letter-spacing:0.33px;color:#2a2a2a;">Normal</div>
<div class="a" style="left:765px;top:341px;width:191px;height:1px;background:#cdcdcd"></div>
<div class="a" style="left:765px;top:342px;width:191px;height:22.6px;background:linear-gradient(90deg,#f0f0f0,#ebebeb);border-bottom:1px solid #cfcfcf"></div>
<div class="t" style="left:771.3px;top:348.9px;font-size:9.8px;letter-spacing:0.33px;color:#2e2e2e;font-weight:bold">Fills</div>
<svg style="left:917.6px;top:347.6px" width="12" height="12" viewBox="0 0 12 12"><polygon points="11.19,4.95 11.19,7.05 9.65,7.37 9.55,7.61 10.42,8.93 8.93,10.42 7.61,9.55 7.37,9.65 7.05,11.19 4.95,11.19 4.63,9.65 4.39,9.55 3.07,10.42 1.58,8.93 2.45,7.61 2.35,7.37 0.81,7.05 0.81,4.95 2.35,4.63 2.45,4.39 1.58,3.07 3.07,1.58 4.39,2.45 4.63,2.35 4.95,0.81 7.05,0.81 7.37,2.35 7.61,2.45 8.93,1.58 10.42,3.07 9.55,4.39 9.65,4.63" fill="#9b9b9b"/><circle cx="6" cy="6" r="1.9" fill="#ededed"/></svg>
<svg style="left:935.7px;top:347.8px" width="12" height="12" viewBox="0 0 12 12"><path d="M6 0.5V11.5M0.5 6H11.5" stroke="#8a8a8a" stroke-width="1.4"/></svg>
<div class="a" style="left:765px;top:365px;width:191px;height:18px;background:#e0e0e0"></div>
<div class="a" style="left:771px;top:376px;width:11px;height:11px;background:#3a87e8;border-radius:2px"></div>
<div class="a" style="left:788.5px;top:373.5px;width:29.3px;height:14px;background:#fff;border:1px solid #c0c0c0;border-radius:3px"><div class="a" style="left:2.5px;top:2.5px;width:22.3px;height:10px;background:#3a3a3a"></div></div>
<div class="a" style="left:828.5px;top:374px;width:73px;height:14px;background:#fff;border:1px solid #c6c6c6;border-radius:3px;overflow:hidden"><div class="a" style="right:0;top:0;width:14px;height:14px;background:#2f86ec"></div></div>
<div class="t" style="left:836px;top:377.9px;font-size:9.8px;letter-spacing:0.33px;color:#2a2a2a;">Normal</div>
<div class="a" style="left:909px;top:374px;width:38.6px;height:16.0px;background:#fff;border:1px solid #c4c4c4;box-shadow:0 0.5px 0.5px rgba(0,0,0,0.06);"></div>
<div class="t" style="left:912px;top:377.9px;font-size:10.4px;letter-spacing:0.45px;color:#2a2a2a;">100 %</div>
<div class="a" style="left:765px;top:383px;width:191px;height:21.4px;background:#f7f7f7;border-bottom:1px solid #d3d3d3;box-shadow:0 -0.5px 0 #d8d8d8"></div>
<div class="t" style="left:771.3px;top:388.3px;font-size:9.8px;letter-spacing:0.33px;color:#2e2e2e;font-weight:bold">Export</div>
<svg style="left:918px;top:387.5px" width="12" height="12" viewBox="0 0 12 12"><path d="M0.6 11.2L2.2 8.2C5 6 8 3.5 10.4 1L11.4 1.9C9.5 5 7 8 4.6 9.7Z" fill="#9a9a9a"/></svg>
<svg style="left:936px;top:388px" width="12" height="12" viewBox="0 0 12 12"><path d="M6 0.5V11.5M0.5 6H11.5" stroke="#8a8a8a" stroke-width="1.4"/></svg>
<div class="a" style="left:765px;top:405px;width:191px;height:127px;background:#eeeeee"></div>
<div class="a" style="left:769px;top:414.4px;width:56.7px;height:15.6px;background:#fff;border:1px solid #c6c6c6;border-radius:3px;box-shadow:0 0.5px 1px rgba(0,0,0,0.1);overflow:hidden"><div class="a" style="left:41.6px;top:0;width:14.1px;height:15.6px;background:linear-gradient(#5aa9f8,#1e77e8)"></div></div><svg style="left:815.2px;top:419.7px" width="7" height="5" viewBox="0 0 7 5"><path d="M1 1.2L3.5 3.7L6 1.2" fill="none" stroke="#fff" stroke-width="1.2"/></svg>
<div class="t" style="left:772.8px;top:417.5px;font-size:10.4px;letter-spacing:0.45px;color:#2a2a2a;">0,5x</div>
<div class="a" style="left:833.2px;top:413.79999999999995px;width:44.6px;height:15.9px;background:#fff;border:1px solid #c4c4c4;box-shadow:0 0.5px 0.5px rgba(0,0,0,0.06);"></div>
<div class="t" style="left:836.5px;top:417.2px;font-size:10.4px;letter-spacing:0.45px;color:#c2c2c2;">None</div>
<div class="a" style="left:884.8px;top:413.4px;width:46.9px;height:17.2px;background:#fff;border:1px solid #c6c6c6;border-radius:4px;box-shadow:0 0.5px 1px rgba(0,0,0,0.12);overflow:hidden"><div class="a" style="left:31.4px;top:0;width:14.5px;height:17.2px;background:linear-gradient(#5aa9f8,#1e77e8)"></div></div><svg style="left:920.5px;top:416.0px" width="8" height="12" viewBox="0 0 8 12"><path d="M1.3 4.3L4 1.6L6.7 4.3M1.3 7.7L4 10.4L6.7 7.7" fill="none" stroke="#fff" stroke-width="1.2"/></svg>
<div class="t" style="left:892.3px;top:417.1px;font-size:9.8px;letter-spacing:0.35px;color:#2a2a2a;">PNG</div>
<svg style="left:937.5px;top:417.2px" width="10" height="10" viewBox="0 0 10 10"><path d="M1 1L9 9M9 1L1 9" stroke="#8e8e8e" stroke-width="1.4"/></svg>
<div class="a" style="left:769px;top:440.0px;width:56.7px;height:16.0px;background:#fff;border:1px solid #c6c6c6;border-radius:3px;box-shadow:0 0.5px 1px rgba(0,0,0,0.1);overflow:hidden"><div class="a" style="left:41.6px;top:0;width:14.1px;height:16.0px;background:linear-gradient(#5aa9f8,#1e77e8)"></div></div><svg style="left:815.2px;top:445.5px" width="7" height="5" viewBox="0 0 7 5"><path d="M1 1.2L3.5 3.7L6 1.2" fill="none" stroke="#fff" stroke-width="1.2"/></svg>
<div class="t" style="left:772.8px;top:443.5px;font-size:10.4px;letter-spacing:0.45px;color:#2a2a2a;">1x</div>
<div class="a" style="left:833.2px;top:439.4px;width:44.6px;height:16.3px;background:#fff;border:1px solid #c4c4c4;box-shadow:0 0.5px 0.5px rgba(0,0,0,0.06);"></div>
<div class="t" style="left:836.5px;top:443.2px;font-size:10.4px;letter-spacing:0.45px;color:#2a2a2a;">@2x</div>
<div class="a" style="left:884.8px;top:439.0px;width:46.9px;height:17.6px;background:#fff;border:1px solid #c6c6c6;border-radius:4px;box-shadow:0 0.5px 1px rgba(0,0,0,0.12);overflow:hidden"><div class="a" style="left:31.4px;top:0;width:14.5px;height:17.6px;background:linear-gradient(#5aa9f8,#1e77e8)"></div></div><svg style="left:920.5px;top:441.8px" width="8" height="12" viewBox="0 0 8 12"><path d="M1.3 4.3L4 1.6L6.7 4.3M1.3 7.7L4 10.4L6.7 7.7" fill="none" stroke="#fff" stroke-width="1.2"/></svg>
<div class="t" style="left:892.3px;top:443.1px;font-size:9.8px;letter-spacing:0.35px;color:#2a2a2a;">PNG</div>
<svg style="left:937.5px;top:443.0px" width="10" height="10" viewBox="0 0 10 10"><path d="M1 1L9 9M9 1L1 9" stroke="#8e8e8e" stroke-width="1.4"/></svg>
<div class="a" style="left:769px;top:466.3px;width:56.7px;height:16.3px;background:#fff;border:1px solid #c6c6c6;border-radius:3px;box-shadow:0 0.5px 1px rgba(0,0,0,0.1);overflow:hidden"><div class="a" style="left:41.6px;top:0;width:14.1px;height:16.3px;background:linear-gradient(#5aa9f8,#1e77e8)"></div></div><svg style="left:815.2px;top:472.0px" width="7" height="5" viewBox="0 0 7 5"><path d="M1 1.2L3.5 3.7L6 1.2" fill="none" stroke="#fff" stroke-width="1.2"/></svg>
<div class="t" style="left:772.8px;top:470.1px;font-size:10.4px;letter-spacing:0.45px;color:#2a2a2a;">1,5x</div>
<div class="a" style="left:833.2px;top:465.7px;width:44.6px;height:16.6px;background:#fff;border:1px solid #c4c4c4;box-shadow:0 0.5px 0.5px rgba(0,0,0,0.06);"></div>
<div class="t" style="left:836.5px;top:469.8px;font-size:10.4px;letter-spacing:0.45px;color:#2a2a2a;">@3x</div>
<div class="a" style="left:884.8px;top:465.3px;width:46.9px;height:17.9px;background:#fff;border:1px solid #c6c6c6;border-radius:4px;box-shadow:0 0.5px 1px rgba(0,0,0,0.12);overflow:hidden"><div class="a" style="left:31.4px;top:0;width:14.5px;height:17.9px;background:linear-gradient(#5aa9f8,#1e77e8)"></div></div><svg style="left:920.5px;top:468.2px" width="8" height="12" viewBox="0 0 8 12"><path d="M1.3 4.3L4 1.6L6.7 4.3M1.3 7.7L4 10.4L6.7 7.7" fill="none" stroke="#fff" stroke-width="1.2"/></svg>
<div class="t" style="left:892.3px;top:469.7px;font-size:9.8px;letter-spacing:0.35px;color:#2a2a2a;">PNG</div>
<svg style="left:937.5px;top:469.5px" width="10" height="10" viewBox="0 0 10 10"><path d="M1 1L9 9M9 1L1 9" stroke="#8e8e8e" stroke-width="1.4"/></svg>
<div class="t" style="left:749.4px;width:80px;text-align:center;top:487.6px;font-size:8.5px;color:#333;">Size</div>
<div class="t" style="left:814.3px;width:80px;text-align:center;top:487.6px;font-size:8.5px;color:#333;">Suffix</div>
<div class="t" style="left:867.2px;width:80px;text-align:center;top:487.6px;font-size:8.5px;color:#333;">Format</div>
<div class="a" style="left:765px;top:503px;width:191px;height:1px;background:#d4d4d4"></div>
<div class="a" style="left:772.6px;top:509.2px;width:132.7px;height:17.8px;background:#fff;border:1px solid #c8c8c8;border-radius:4px;box-shadow:0 0.5px 1px rgba(0,0,0,0.12)"></div>
<div class="t" style="left:799px;width:80px;text-align:center;top:513.7px;font-size:9.8px;letter-spacing:0.33px;color:#2a2a2a;">Export Star 1</div>
<div class="a" style="left:911.7px;top:509.2px;width:35.7px;height:17.8px;background:#fff;border:1px solid #c8c8c8;border-radius:4px;box-shadow:0 0.5px 1px rgba(0,0,0,0.12)"></div>
<svg style="left:924px;top:511px" width="11" height="14" viewBox="0 0 11 14"><path d="M3.8 6H1V13H10V6H7.2M5.5 9V1.2M3 3.6L5.5 1.2L8 3.6" fill="none" stroke="#333" stroke-width="1.1"/></svg>
</body></html>
